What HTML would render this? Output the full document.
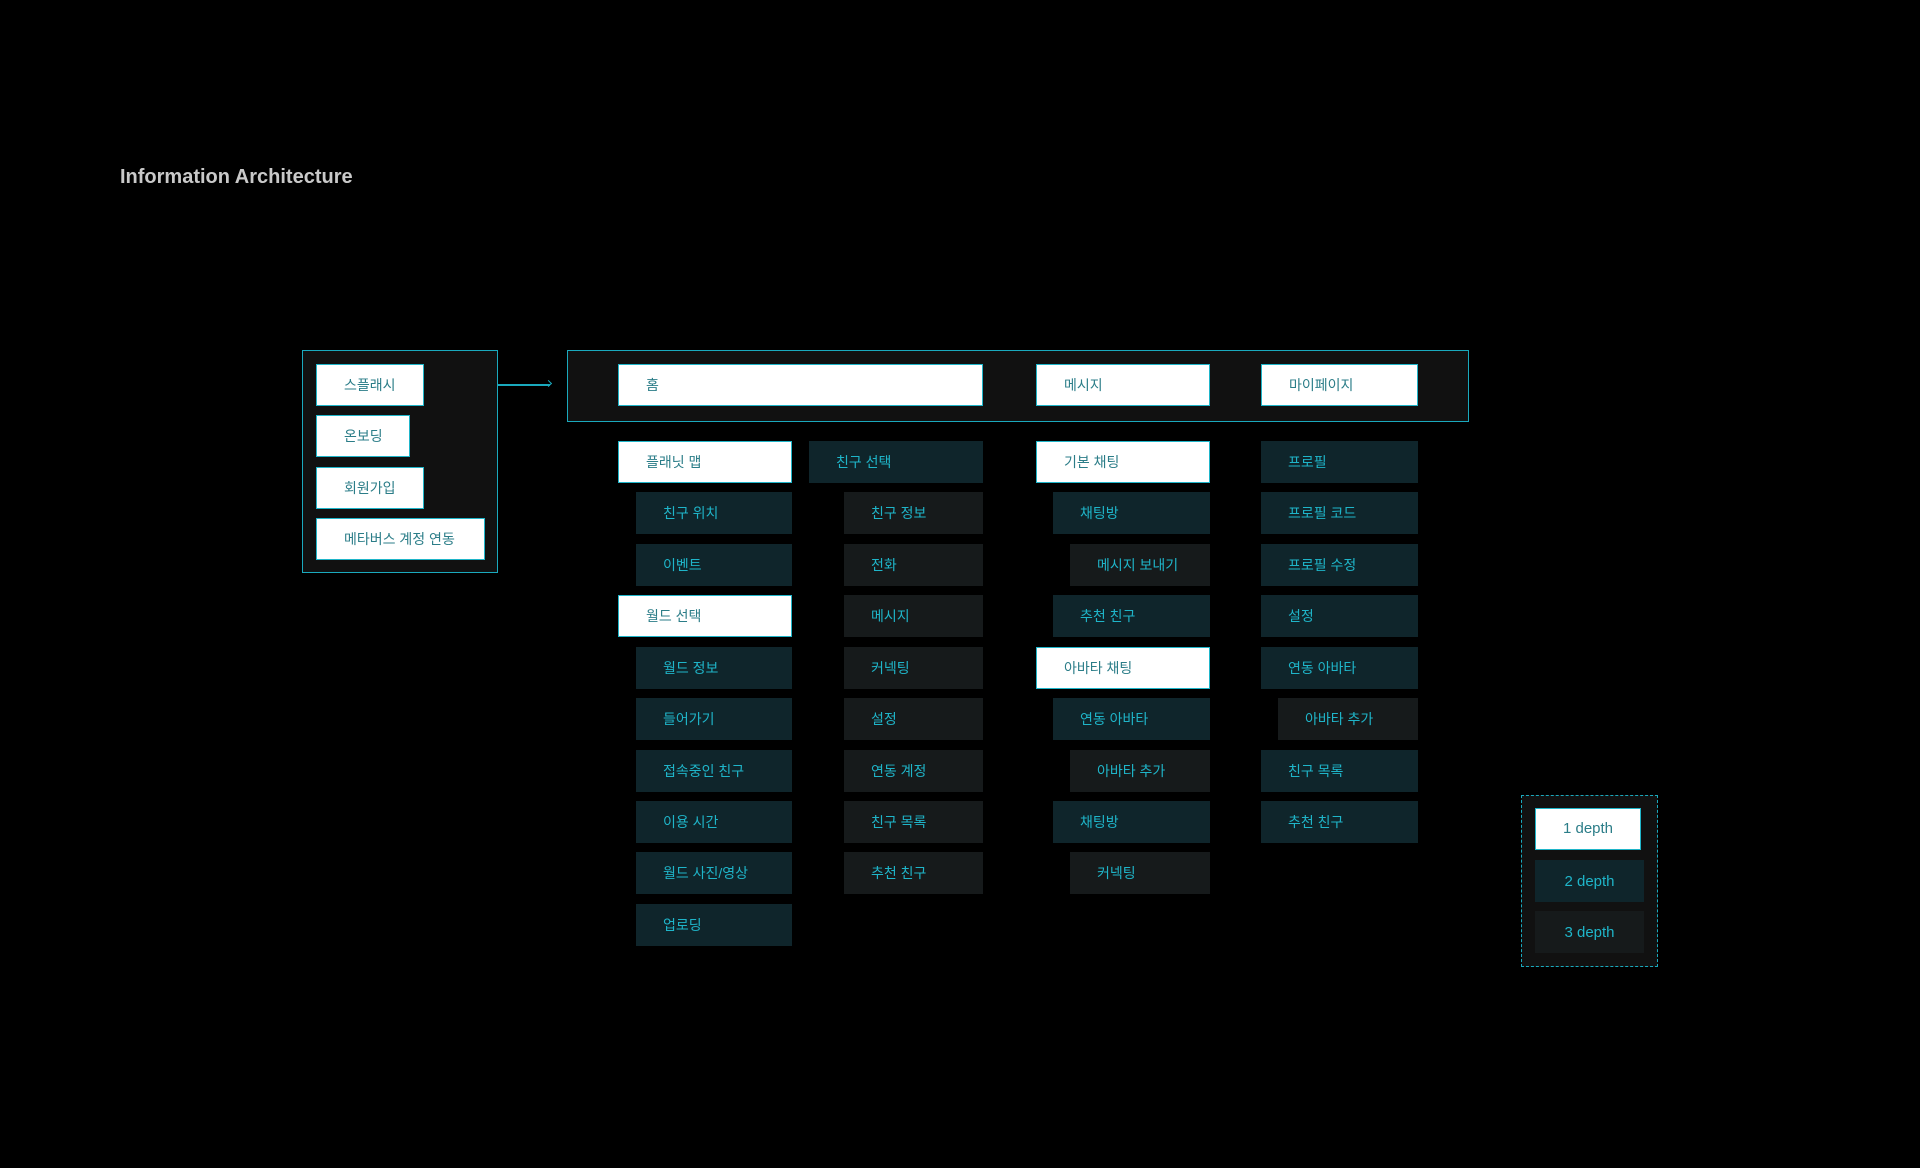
<!DOCTYPE html>
<html><head><meta charset="utf-8"><style>
*{margin:0;padding:0;box-sizing:border-box}
body{width:1920px;height:1168px;background:#000;position:relative;overflow:hidden;font-family:"Liberation Sans","Noto Sans CJK KR",sans-serif}
.t{position:absolute;left:120px;top:166px;font-size:20px;font-weight:bold;color:#c9c9c9}
.c{position:absolute;background:#111;border:1.5px solid #1aa9bd}
.b{position:absolute;height:42px;line-height:43px;font-size:14px;padding-left:27px;white-space:nowrap}
.d1{background:#fff;border:1.5px solid #1fb5c9;color:#2b7d88;line-height:40px}
.d2{background:#0f252b;color:#1fb5c9}
.d3{background:#161a1b;color:#1fb5c9}
.lg{position:absolute;left:1521px;top:795px;width:137px;height:172px;background:#111;border:1.5px dashed #1aa9bd}
.lb{position:absolute;height:42px;line-height:43px;font-size:15px;text-align:center}
</style></head><body>
<div class="t">Information Architecture</div>
<div class="c" style="left:302px;top:350px;width:196px;height:223px"></div>
<div class="b d1" style="left:316px;top:364px;width:108px">스플래시</div>
<div class="b d1" style="left:316px;top:415px;width:94px">온보딩</div>
<div class="b d1" style="left:316px;top:467px;width:108px">회원가입</div>
<div class="b d1" style="left:316px;top:518px;width:169px">메타버스 계정 연동</div>
<div style="position:absolute;left:498px;top:384px;width:52px;height:1.5px;background:#1aa9bd"></div>
<div style="position:absolute;left:546px;top:381px;width:5px;height:5px;border-top:1.5px solid #1aa9bd;border-right:1.5px solid #1aa9bd;transform:rotate(45deg)"></div>
<div class="c" style="left:567px;top:350px;width:902px;height:72px"></div>
<div class="b d1" style="left:618px;top:364px;width:365px">홈</div>
<div class="b d1" style="left:1036px;top:364px;width:174px">메시지</div>
<div class="b d1" style="left:1261px;top:364px;width:157px">마이페이지</div>

<div class="b d1" style="left:618px;top:441px;width:174px">플래닛 맵</div>
<div class="b d2" style="left:636px;top:492px;width:156px">친구 위치</div>
<div class="b d2" style="left:636px;top:544px;width:156px">이벤트</div>
<div class="b d1" style="left:618px;top:595px;width:174px">월드 선택</div>
<div class="b d2" style="left:636px;top:647px;width:156px">월드 정보</div>
<div class="b d2" style="left:636px;top:698px;width:156px">들어가기</div>
<div class="b d2" style="left:636px;top:750px;width:156px">접속중인 친구</div>
<div class="b d2" style="left:636px;top:801px;width:156px">이용 시간</div>
<div class="b d2" style="left:636px;top:852px;width:156px">월드 사진/영상</div>
<div class="b d2" style="left:636px;top:904px;width:156px">업로딩</div>

<div class="b d2" style="left:809px;top:441px;width:174px">친구 선택</div>
<div class="b d3" style="left:844px;top:492px;width:139px">친구 정보</div>
<div class="b d3" style="left:844px;top:544px;width:139px">전화</div>
<div class="b d3" style="left:844px;top:595px;width:139px">메시지</div>
<div class="b d3" style="left:844px;top:647px;width:139px">커넥팅</div>
<div class="b d3" style="left:844px;top:698px;width:139px">설정</div>
<div class="b d3" style="left:844px;top:750px;width:139px">연동 계정</div>
<div class="b d3" style="left:844px;top:801px;width:139px">친구 목록</div>
<div class="b d3" style="left:844px;top:852px;width:139px">추천 친구</div>

<div class="b d1" style="left:1036px;top:441px;width:174px">기본 채팅</div>
<div class="b d2" style="left:1053px;top:492px;width:157px">채팅방</div>
<div class="b d3" style="left:1070px;top:544px;width:140px">메시지 보내기</div>
<div class="b d2" style="left:1053px;top:595px;width:157px">추천 친구</div>
<div class="b d1" style="left:1036px;top:647px;width:174px">아바타 채팅</div>
<div class="b d2" style="left:1053px;top:698px;width:157px">연동 아바타</div>
<div class="b d3" style="left:1070px;top:750px;width:140px">아바타 추가</div>
<div class="b d2" style="left:1053px;top:801px;width:157px">채팅방</div>
<div class="b d3" style="left:1070px;top:852px;width:140px">커넥팅</div>

<div class="b d2" style="left:1261px;top:441px;width:157px">프로필</div>
<div class="b d2" style="left:1261px;top:492px;width:157px">프로필 코드</div>
<div class="b d2" style="left:1261px;top:544px;width:157px">프로필 수정</div>
<div class="b d2" style="left:1261px;top:595px;width:157px">설정</div>
<div class="b d2" style="left:1261px;top:647px;width:157px">연동 아바타</div>
<div class="b d3" style="left:1278px;top:698px;width:140px">아바타 추가</div>
<div class="b d2" style="left:1261px;top:750px;width:157px">친구 목록</div>
<div class="b d2" style="left:1261px;top:801px;width:157px">추천 친구</div>

<div class="lg"></div>
<div class="lb d1" style="left:1535px;top:808px;width:106px;line-height:40px">1 depth</div>
<div class="lb d2" style="left:1535px;top:860px;width:109px">2 depth</div>
<div class="lb d3" style="left:1535px;top:911px;width:109px">3 depth</div>
</body></html>
